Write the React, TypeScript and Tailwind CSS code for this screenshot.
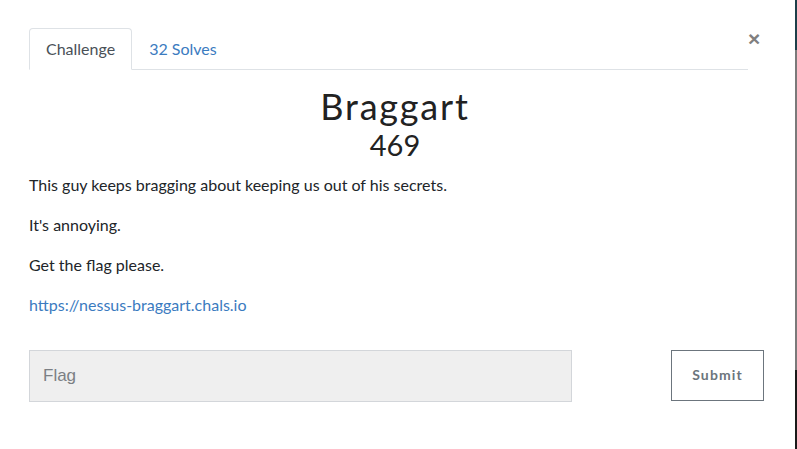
import { useState } from "react";

const Tabs = () => (
  <div className="flex items-end border-b border-[#dee2e6] w-[719px]">
    <div className="-mb-px px-4 py-2 border border-[#dee2e6] border-b-white rounded-t bg-white text-[#495057] leading-6">
      Challenge
    </div>
    <div className="px-4 py-2 text-[#3b7bbf] leading-6 ml-px">32 Solves</div>
  </div>
);

export default function App() {
  const [flag, setFlag] = useState("");

  return (
    <div className="flex w-[797px] h-[449px] bg-white overflow-hidden font-['Lato',sans-serif] text-[#212529]">
      <div className="relative flex-1 pl-[29px] pt-[28px]">
        <Tabs />
        <button className="absolute left-[748px] top-[28px] text-[21px] font-bold leading-none text-[#808080] font-['Liberation_Sans',sans-serif]">
          ×
        </button>

        <div className="w-[732px] text-center">
          <h2 className="mt-[14px] font-['Lato',sans-serif] text-[36px] leading-[44px] tracking-[0.05em] font-normal text-[#222]">
            Braggart
          </h2>
          <h3 className="mt-[-1px] text-[29px] leading-[36px] text-[#222]">469</h3>
        </div>

        <div className="mt-[10px] text-[16px] leading-6">
          <p className="mb-4">This guy keeps bragging about keeping us out of his secrets.</p>
          <p className="mb-4">It's annoying.</p>
          <p className="mb-4">Get the flag please.</p>
          <p>
            <a href="#" className="text-[#3b7bbf]">
              https://nessus-braggart.chals.io
            </a>
          </p>
        </div>

        <div className="mt-[33px] flex items-start">
          <input
            value={flag}
            onChange={(e) => setFlag(e.target.value)}
            placeholder="Flag"
            className="w-[543px] h-[52px] bg-[#efefef] border border-[#d3d6da] px-[13px] text-[17px] font-['Liberation_Sans',sans-serif] placeholder:text-[#7b7f84] outline-none"
          />
          <button className="ml-[99px] w-[93px] h-[51px] pb-[2px] border border-[#6c757d] text-[#6c757d] text-[14px] font-bold tracking-[0.08em] font-['Lato',sans-serif]">
            Submit
          </button>
        </div>
      </div>
      <div className="w-[2px] flex flex-col">
        <div className="h-[50px] bg-[#1c3f4a]" />
        <div className="h-[320px] bg-[#7a7a7a]" />
        <div className="flex-1 bg-[#1a1a1a]" />
      </div>
    </div>
  );
}
